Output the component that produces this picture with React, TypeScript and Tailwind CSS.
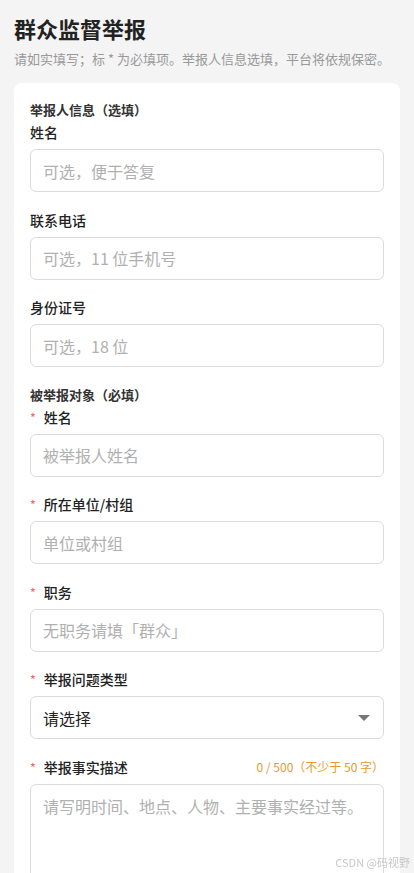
import { ReactNode } from "react"

const font = { fontFamily: '"Noto Sans CJK SC", "Noto Sans", sans-serif' }

function Label({ text, required }: { text: string; required?: boolean }) {
  return (
    <div className="flex h-[22px] items-center text-[14px] font-medium leading-[22px] text-[#222]">
      {required && <span className="mr-[8px] text-[12px] text-[#f56c6c]">*</span>}
      {text}
    </div>
  )
}

function Field({
  label,
  placeholder,
  required,
  first,
}: {
  label: string
  placeholder: string
  required?: boolean
  first?: boolean
}) {
  return (
    <div className={first ? "mt-px" : "mt-[16.5px]"}>
      <Label text={label} required={required} />
      <div className="mt-[6px] flex h-[43px] items-center rounded-[6px] border border-[#dcdcdc] bg-white px-3 text-[16px] text-[#b0b0b0]">
        {placeholder}
      </div>
    </div>
  )
}

function Section({ title, children, top }: { title: string; children: ReactNode; top?: boolean }) {
  return (
    <div className={top ? "" : "mt-[17.5px]"}>
      <div className="text-[13px] font-bold leading-5 text-[#333]">{title}</div>
      {children}
    </div>
  )
}

export default function App() {
  return (
    <div style={font} className="h-[873px] overflow-hidden bg-[#f4f4f4] px-[14px] pt-3">
      <h1 className="text-[22px] font-bold leading-[33px] text-[#222]">群众监督举报</h1>
      <p className="mt-1 text-[13px] leading-5 text-[#999]">
        请如实填写；标 * 为必填项。举报人信息选填，平台将依规保密。
      </p>

      <div className="mt-[14px] rounded-[8px] bg-white px-4 pb-6 pt-[17px]">
        <Section title="举报人信息（选填）" top>
          <Field first label="姓名" placeholder="可选，便于答复" />
          <Field label="联系电话" placeholder="可选，11 位手机号" />
          <Field label="身份证号" placeholder="可选，18 位" />
        </Section>

        <Section title="被举报对象（必填）">
          <Field first required label="姓名" placeholder="被举报人姓名" />
          <Field required label="所在单位/村组" placeholder="单位或村组" />
          <Field required label="职务" placeholder="无职务请填「群众」" />

          <div className="mt-[16.5px]">
            <Label text="举报问题类型" required />
            <div className="mt-[6px] flex h-[43px] items-center justify-between rounded-[6px] border border-[#dcdcdc] bg-white pl-3 pr-[13px] text-[16px] text-[#222]">
              <span>请选择</span>
              <svg width="12" height="6" viewBox="0 0 12 6">
                <path d="M0 0h12L6 6z" fill="#777" />
              </svg>
            </div>
          </div>

          <div className="mt-[16.5px]">
            <div className="flex items-center justify-between">
              <Label text="举报事实描述" required />
              <span className="text-[12px] text-[#e69a2e]">0 / 500（不少于 50 字）</span>
            </div>
            <div className="mt-[6px] h-[140px] rounded-[6px] border border-[#dcdcdc] bg-white px-3 pt-[9px] text-[16px] leading-6 text-[#b0b0b0]">
              请写明时间、地点、人物、主要事实经过等。
            </div>
          </div>
        </Section>
      </div>

      <div className="fixed bottom-[3px] right-[4px] text-[11px] text-[#c8c8c8]">CSDN @码视野</div>
    </div>
  )
}
